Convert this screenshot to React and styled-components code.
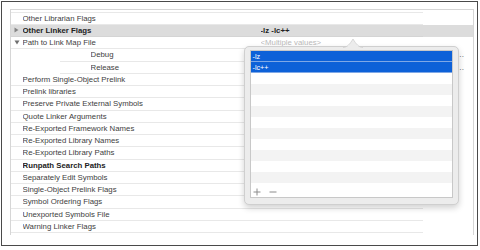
import React from "react";
import styled, { createGlobalStyle } from "styled-components";

const Global = createGlobalStyle`
  html, body { margin: 0; padding: 0; background: #fff; }
  body { font-family: "Liberation Sans", Arial, Helvetica, sans-serif; }
`;

const Screen = styled.div`
  position: relative;
  box-sizing: border-box;
  width: 477px;
  height: 245px;
  margin: 1px 0 0 1px;
  border: 1.5px solid #4a4a4a;
  background: #fff;
  padding: 6.5px 0 0 7.5px;
`;

const Frame = styled.div`
  box-sizing: border-box;
  width: 464px;
  height: 226px;
  border: 1px solid #d6d6d6;
  border-bottom: none;
  overflow: hidden;
`;

const TopCap = styled.div`
  height: 2px;
  width: 412px;
  border-bottom: 1px solid #e8e8e8;
`;

const Row = styled.div`
  height: 12.25px;
  background: ${(p) => (p.$active ? "#dcdcdc" : "transparent")};
`;

const Line = styled.div`
  box-sizing: border-box;
  height: 100%;
  margin-left: ${(p) => p.$indent}px;
  width: ${(p) => 412 - p.$indent}px;
  border-bottom: 1px solid ${(p) => (p.$active ? "#d4d4d4" : "#e8e8e8")};
  display: flex;
  align-items: center;
  padding-left: ${(p) => (p.$indent ? 22 : 3)}px;
  font-size: 7.8px;
  color: #3e3e3e;
  white-space: nowrap;
`;

const Toggle = styled.span`
  flex: 0 0 9px;
  display: flex;
  align-items: center;
  height: 100%;
`;

const Label = styled.span`
  flex: 0 0 ${(p) => p.$w}px;
  font-weight: ${(p) => (p.$bold ? 700 : 400)};
  color: ${(p) => (p.$bold ? "#222" : "#3e3e3e")};
  overflow: hidden;
`;

const Value = styled.span`
  flex: 0 0 206px;
  overflow: hidden;
  text-overflow: ellipsis;
  font-weight: ${(p) => (p.$bold ? 700 : 400)};
  color: ${(p) => (p.$placeholder ? "#b9b9b9" : p.$bold ? "#222" : "#3e3e3e")};
`;

const Popover = styled.div`
  position: absolute;
  left: 241.5px;
  top: 43.5px;
  box-sizing: border-box;
  width: 215px;
  height: 159px;
  background: #ececec;
  border: 1px solid #cfcfcf;
  border-radius: 5px;
  box-shadow: 0 3px 6px rgba(0, 0, 0, 0.18);
  padding: 3.5px 5px 6px 5px;
`;

const Arrow = styled.svg`
  position: absolute;
  left: 98px;
  top: -9px;
  display: block;
`;

const List = styled.div`
  box-sizing: border-box;
  height: 147.5px;
  background: #fff;
  border: 1px solid #c8c8c8;
  display: flex;
  flex-direction: column;
`;

const Item = styled.div`
  box-sizing: border-box;
  height: 11px;
  flex: 0 0 11px;
  padding-left: 2px;
  display: flex;
  align-items: center;
  font-size: 7.2px;
  color: #fff;
  background: ${(p) => (p.$selected ? "#0d61d8" : p.$odd ? "#f3f3f3" : "#fff")};
  border-bottom: ${(p) => (p.$selected ? "1px solid #7fa8e6" : "none")};
`;

const Footer = styled.div`
  flex: 1;
  display: flex;
  align-items: center;
  gap: 8px;
  padding: 4px 0 0 2.5px;
`;

const SmallButton = styled.svg`
  display: block;
`;

const rows = [
  { label: "Other Librarian Flags" },
  { label: "Other Linker Flags", bold: true, toggle: "right", active: true, value: "-lz -lc++", valueBold: true },
  { label: "Path to Link Map File", toggle: "down", value: "<Multiple values>", placeholder: true, childLine: true },
  { label: "Debug", indent: 49, value: "$(TARGET_TEMP_DIR)/$(PRODUCT_NAME)-LinkMap-$(CURRENT_VARIANT)-$(CURRENT_ARCH).txt debugi" },
  { label: "Release", indent: 49, value: "$(TARGET_TEMP_DIR)/$(PRODUCT_NAME)-LinkMap-$(CURRENT_VARIANT)-$(CURRENT_ARCH).txt releaso" },
  { label: "Perform Single-Object Prelink" },
  { label: "Prelink libraries" },
  { label: "Preserve Private External Symbols" },
  { label: "Quote Linker Arguments" },
  { label: "Re-Exported Framework Names" },
  { label: "Re-Exported Library Names" },
  { label: "Re-Exported Library Paths" },
  { label: "Runpath Search Paths", bold: true },
  { label: "Separately Edit Symbols" },
  { label: "Single-Object Prelink Flags" },
  { label: "Symbol Ordering Flags" },
  { label: "Unexported Symbols File" },
  { label: "Warning Linker Flags" },
  { label: "" },
];

function Triangle({ dir }) {
  if (dir === "right") {
    return (
      <svg width="5" height="6" viewBox="0 0 5 6">
        <path d="M0.5 0.5 L4.5 3 L0.5 5.5 Z" fill="#858585" />
      </svg>
    );
  }
  return (
    <svg width="6" height="5" viewBox="0 0 6 5">
      <path d="M0.5 0.5 L5.5 0.5 L3 4.5 Z" fill="#6f6f6f" />
    </svg>
  );
}

export default function App() {
  const items = ["-lz", "-lc++", "", "", "", "", "", "", "", "", "", ""];
  return (
    <>
      <Global />
      <Screen>
        <Frame>
          <TopCap />
          {rows.map((r, i) => {
            const indent = r.indent || 0;
            const pad = indent ? 22 : 3;
            const labelW = 261 - (11 + indent + pad + 9);
            return (
              <Row key={i} $active={r.active}>
                <Line $indent={indent} $active={r.active}>
                  <Toggle>{r.toggle ? <Triangle dir={r.toggle} /> : null}</Toggle>
                  <Label $w={labelW} $bold={r.bold}>{r.label}</Label>
                  {r.value ? (
                    <Value $bold={r.valueBold} $placeholder={r.placeholder}>
                      {r.value}
                    </Value>
                  ) : null}
                </Line>
              </Row>
            );
          })}
        </Frame>
        <Popover>
          <Arrow width="20" height="10" viewBox="0 0 20 10">
            <path d="M0 10 C4 10 7 6 10 1 C13 6 16 10 20 10 Z" fill="#ececec" />
            <path d="M0 9.5 C4 9.5 7 6 10 1 C13 6 16 9.5 20 9.5" fill="none" stroke="#cfcfcf" strokeWidth="0.8" />
          </Arrow>
          <List>
            {items.map((t, i) => (
              <Item key={i} $selected={i < 2} $odd={i % 2 === 1}>
                {t}
              </Item>
            ))}
            <Footer>
              <SmallButton width="8" height="8" viewBox="0 0 8 8">
                <path d="M4 0.5 V7.5 M0.5 4 H7.5" stroke="#8c8c8c" strokeWidth="1" />
              </SmallButton>
              <SmallButton width="8" height="8" viewBox="0 0 8 8">
                <path d="M0.5 4 H7.5" stroke="#8c8c8c" strokeWidth="1" />
              </SmallButton>
            </Footer>
          </List>
        </Popover>
      </Screen>
    </>
  );
}
